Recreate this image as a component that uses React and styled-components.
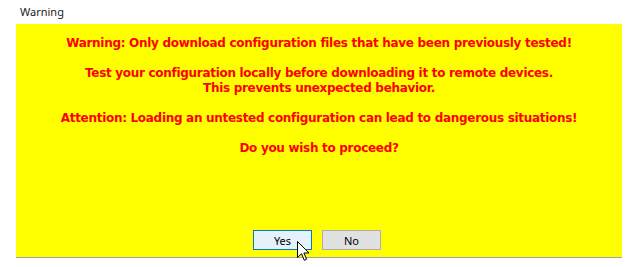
import React from 'react'
import styled, { createGlobalStyle } from 'styled-components'

const GlobalStyle = createGlobalStyle`
  html, body {
    margin: 0;
    padding: 0;
    background: #ffffff;
  }
`

const lines = [
  'Warning: Only download configuration files that have been previously tested!',
  '',
  'Test your configuration locally before downloading it to remote devices.',
  'This prevents unexpected behavior.',
  '',
  'Attention: Loading an untested configuration can lead to dangerous situations!',
  '',
  'Do you wish to proceed?',
]

const App = () => {
  return (
    <Window>
      <GlobalStyle />
      <TitleBar>Warning</TitleBar>
      <Panel>
        <Message>
          {lines.map((line, i) => (
            <Line key={i}>{line || '\u00a0'}</Line>
          ))}
        </Message>
        <ButtonRow>
          <Button primary>
            Yes
            <Cursor viewBox='0 0 13 21' width='13' height='21'>
              <path
                d='M0.5 0.5 L0.5 16.5 L4.5 12.7 L7.3 19.3 L9.6 18.3 L6.9 12 L12 12 Z'
                fill='#ffffff'
                stroke='#000000'
                strokeWidth='1'
                strokeLinejoin='miter'
              />
            </Cursor>
          </Button>
          <Button>No</Button>
        </ButtonRow>
      </Panel>
    </Window>
  )
}

const Window = styled.div`
  width: 638px;
  height: 267px;
  background: #ffffff;
  overflow: hidden;
`

const TitleBar = styled.div`
  height: 24px;
  padding-left: 20px;
  line-height: 24px;
  font-family: 'Noto Sans', 'DejaVu Sans', sans-serif;
  font-size: 11px;
  color: #1a1a1a;
  box-sizing: border-box;
`

const Panel = styled.div`
  margin-left: 16px;
  width: 606px;
  height: 233px;
  background: #ffff00;
  border-bottom: 1px solid #a0a0a0;
  display: flex;
  flex-direction: column;
  align-items: center;
`

const Message = styled.div`
  padding-top: 12px;
  display: flex;
  flex-direction: column;
  align-items: center;
  font-family: 'DejaVu Sans', Verdana, sans-serif;
  font-weight: bold;
  font-size: 12px;
  letter-spacing: -0.3px;
  line-height: 15px;
  color: #ff0000;
`

const Line = styled.div`
  white-space: nowrap;
`

const ButtonRow = styled.div`
  margin-top: auto;
  padding-bottom: 7px;
  display: flex;
  gap: 10px;
  transform: translateX(-2px);
`

const Button = styled.div`
  position: relative;
  width: 59px;
  height: 20px;
  box-sizing: border-box;
  display: flex;
  align-items: center;
  justify-content: center;
  font-family: 'Noto Sans', 'DejaVu Sans', sans-serif;
  font-size: 11px;
  color: #000000;
  background: ${(p) => (p.primary ? '#e5f1fb' : '#e1e1e1')};
  border: 1px solid ${(p) => (p.primary ? '#0078d7' : '#adadad')};
`

const Cursor = styled.svg`
  position: absolute;
  left: 43px;
  top: 10px;
  overflow: visible;
`

export default App
